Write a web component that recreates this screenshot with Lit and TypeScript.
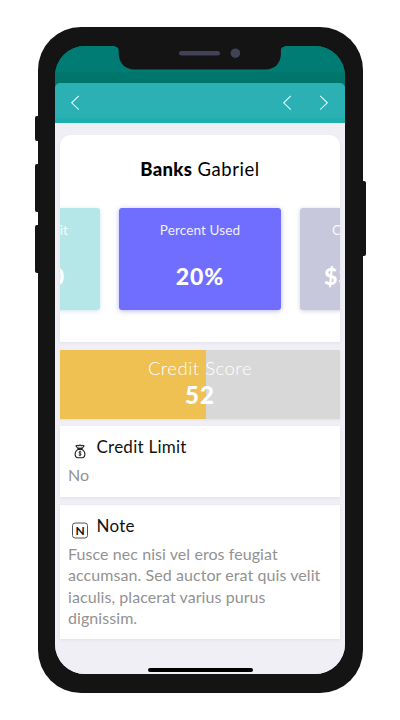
import { LitElement, html, css, svg } from "lit";
import { customElement } from "lit/decorators.js";

@customElement("app-root")
export class AppRoot extends LitElement {
  static styles = css`
    :host {
      display: block;
      box-sizing: border-box;
      width: 400px;
      height: 720px;
      padding: 26.5px 0 0 37.5px;
      overflow: hidden;
      background: #fff;
      font-family: Lato, "Open Sans", sans-serif;
      color: #111;
    }
    * {
      box-sizing: border-box;
    }
    .phone {
      position: relative;
      width: 325px;
      height: 666.5px;
      padding: 19.5px 17.5px 19px;
      border-radius: 43px;
      background: #141414;
    }
    .key {
      position: absolute;
      width: 8px;
      left: -3px;
      border-radius: 2px;
      background: #141414;
    }
    .silent { top: 89.5px; height: 25px; }
    .up { top: 137.5px; height: 48px; }
    .down { top: 198px; height: 48px; }
    .power { left: auto; right: -3px; top: 154px; height: 75.5px; }
    .notch {
      position: absolute;
      left: 77.5px;
      top: 19px;
      width: 170px;
      height: 24px;
    }
    .screen {
      display: flex;
      flex-direction: column;
      height: 100%;
      border-radius: 30px;
      overflow: hidden;
      background: linear-gradient(#007c75 0, #007c75 60px, #f0eff5 60px);
    }
    .status {
      height: 37px;
      flex: none;
      background: linear-gradient(#007c75 0, #007c75 68%, #00756c 74%);
    }
    .navwrap {
      flex: none;
      background: #00756c;
    }
    .nav {
      display: flex;
      align-items: center;
      height: 39.5px;
      padding: 0 16px 0 15px;
      border-radius: 5px 5px 0 0;
      background: linear-gradient(#2bb0b4 0, #2bb0b4 86%, #1fafae 88%);
    }
    .nav svg { display: block; }
    .gap { flex: 1; }
    .next { margin-left: 27px; }
    .content {
      flex: 1;
      padding: 12.5px 5px 0;
      background: #f0eff5;
    }
    .card {
      background: #fff;
      box-shadow: 0 1px 3px rgba(60, 50, 90, 0.07);
    }
    .summary {
      height: 207px;
      padding-top: 22px;
      border-radius: 10px 10px 0 0;
      overflow: hidden;
    }
    .name {
      font-size: 18.5px;
      line-height: 24px;
      text-align: center;
      white-space: pre;
      letter-spacing: 0.55px;
      color: #000;
    }
    .name b { font-weight: 900; letter-spacing: 0.3px; }
    .strip {
      display: flex;
      justify-content: center;
      gap: 19px;
      margin-top: 27px;
    }
    .tile {
      flex: none;
      width: 162px;
      height: 102px;
      padding: 13px 0 0;
      border-radius: 3px;
      text-align: center;
      white-space: nowrap;
      color: #fff;
      background: #6f6eff;
      box-shadow: 0 1px 5px rgba(70, 70, 200, 0.4);
    }
    .label { font-size: 13.5px; line-height: 18px; opacity: 0.9; letter-spacing: 0.12px; }
    .value { font-size: 23px; line-height: 30px; font-weight: 900; margin-top: 22px; letter-spacing: 1px; }
    .before { background: #b6e7e8; text-align: right; padding-right: 32px; box-shadow: 0 1px 4px rgba(60, 160, 200, 0.25); }
    .before .value { padding-right: 3px; }
    .after { background: #c7c8dc; text-align: left; padding-left: 24px; box-shadow: 0 1px 4px rgba(80, 80, 120, 0.25); }
    .after .label { padding-left: 8px; }
    .score {
      height: 68.5px;
      margin-top: 8px;
      padding-top: 6.3px;
      text-align: center;
      color: #fff;
      box-shadow: 0 1px 2px rgba(60, 50, 90, 0.08);
    }
    .scorelabel { font-size: 18.5px; line-height: 24px; letter-spacing: 0.5px; font-weight: 300; }
    .scorevalue { font-size: 24px; line-height: 28px; font-weight: 900; margin-top: 1px; letter-spacing: 1.2px; }
    .limit { height: 71px; margin-top: 7.5px; padding: 10.4px 8px 0; }
    .note { height: 134.5px; margin-top: 7.5px; padding: 10.9px 8px 0; }
    .head { display: flex; gap: 4.5px; height: 22px; }
    .head svg { flex: none; margin-top: 3px; }
    .title { font-size: 17px; line-height: 22px; letter-spacing: 0.25px; color: #111; }
    .body { margin-top: 5.8px; font-size: 16px; line-height: 21.15px; color: #929292; white-space: pre; letter-spacing: 0.07px; }
    .iconletter { font: 700 12px Lato, sans-serif; }
    .home {
      position: absolute;
      left: 110.5px;
      bottom: 21.2px;
      width: 104.5px;
      height: 3.8px;
      border-radius: 2px;
      background: #000;
    }
  `;

  private chevron(path: string, cls = "") {
    return html`<svg class=${cls} width="10" height="16" viewBox="0 0 10 16">
      ${svg`<path d=${path} fill="none" stroke="#e0f6f5" stroke-width="1.15"></path>`}
    </svg>`;
  }

  render() {
    const left = "M8.8 0.9 L1.7 7.8 L8.8 14.7";
    const right = "M1.2 0.9 L8.3 7.8 L1.2 14.7";
    return html`
      <div class="phone">
        <div class="key silent"></div>
        <div class="key up"></div>
        <div class="key down"></div>
        <div class="key power"></div>
        <div class="screen">
          <div class="status"></div>
          <div class="navwrap">
            <div class="nav">
              ${this.chevron(left)}
              <div class="gap"></div>
              ${this.chevron(left)} ${this.chevron(right, "next")}
            </div>
          </div>
          <div class="content">
            <div class="card summary">
              <div class="name"><b>Banks</b> Gabriel</div>
              <div class="strip">
                <div class="tile before">
                  <div class="label">Credit Limit</div>
                  <div class="value">$5,000</div>
                </div>
                <div class="tile">
                  <div class="label">Percent Used</div>
                  <div class="value">20%</div>
                </div>
                <div class="tile after">
                  <div class="label">Credit Used</div>
                  <div class="value">$3,000</div>
                </div>
              </div>
            </div>
            <div class="score" style="background: linear-gradient(90deg, #efc153 52%, #d8d8d8 52%)">
              <div class="scorelabel">Credit Score</div>
              <div class="scorevalue">52</div>
            </div>
            <div class="card limit">
              <div class="head">
                <svg width="24" height="24" viewBox="0 0 24 24" fill="none" stroke="#222" stroke-width="1.1">
                  <path d="M9.7 9.2 L8 6.8 Q9.2 5.8 10.4 6.8 Q12 5.3 13.6 6.8 Q14.8 5.8 16 6.8 L14.3 9.2 Z"></path>
                  <path d="M9.7 9.2 H14.3 M9.9 10.4 C7.6 12 7 13.7 7.1 15.5 Q7.3 18.6 10 18.7 H14 Q16.7 18.6 16.9 15.5 C17 13.7 16.4 12 14.1 10.4 Z"></path>
                  <path d="M13.4 13 Q12 12.1 11.1 13 Q10.6 14 12 14.4 Q13.6 14.8 13 15.9 Q12 16.8 10.6 15.9 M12 11.7 V17.2" stroke-width="0.9"></path>
                </svg>
                <div class="title">Credit Limit</div>
              </div>
              <div class="body">No</div>
            </div>
            <div class="card note">
              <div class="head">
                <svg width="24" height="24" viewBox="0 0 24 24">
                  <rect x="4.5" y="5" width="15" height="15" rx="2.6" fill="none" stroke="#555" stroke-width="1"></rect>
                  <text class="iconletter" x="12" y="16.9" text-anchor="middle" fill="#111">N</text>
                </svg>
                <div class="title">Note</div>
              </div>
              <div class="body">Fusce nec nisi vel eros feugiat
accumsan. Sed auctor erat quis velit
iaculis, placerat varius purus
dignissim.</div>
            </div>
          </div>
        </div>
        <svg class="notch" viewBox="0 0 170 24">
          <path d="M0 0 V0.7 Q3.7 0.9 3.7 4 V8 C4 17 10 23.5 19.5 23.5 H150.5 C160 23.5 165.7 17 165.9 8 V4 Q165.9 0.9 169.6 0.7 V0 Z" fill="#141414"></path>
          <rect x="64" y="5" width="41" height="4.6" rx="2.3" fill="#414157"></rect>
          <circle cx="120.4" cy="7.2" r="4.8" fill="#414157"></circle>
        </svg>
        <div class="home"></div>
      </div>
    `;
  }
}
